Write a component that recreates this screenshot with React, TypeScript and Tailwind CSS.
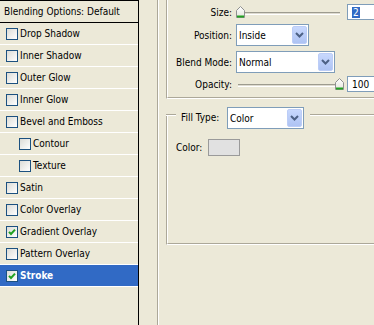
import React from 'react';

const layers = [
  { label: 'Drop Shadow' },
  { label: 'Inner Shadow' },
  { label: 'Outer Glow' },
  { label: 'Inner Glow' },
  { label: 'Bevel and Emboss' },
  { label: 'Contour', indent: true },
  { label: 'Texture', indent: true },
  { label: 'Satin' },
  { label: 'Color Overlay' },
  { label: 'Gradient Overlay', checked: true },
  { label: 'Pattern Overlay' },
  { label: 'Stroke', checked: true, selected: true },
];

const CheckBox: React.FC<{ checked?: boolean }> = ({ checked }) => (
  <span className="flex h-[12px] w-[12px] shrink-0 items-center justify-center border border-[#1c5180] bg-linear-to-br from-[#dcdcd7] to-white">
    {checked && (
      <svg width="8" height="8" viewBox="0 0 8 8">
        <path d="M1 3.8 L3 6 L7 1.6" stroke="#21a121" strokeWidth="2" fill="none" />
      </svg>
    )}
  </span>
);

const Chevron = () => (
  <svg width="9" height="6" viewBox="0 0 9 6">
    <path d="M1 1 L4.5 4.5 L8 1" stroke="#4d6185" strokeWidth="2" fill="none" />
  </svg>
);

const Dropdown: React.FC<{ value: string; width: string }> = ({ value, width }) => (
  <div className={`flex h-[22px] shrink-0 items-stretch border border-[#7f9db9] bg-white ${width}`}>
    <span className="flex flex-1 items-center pl-[2px]">{value}</span>
    <span className="m-[1px] flex w-[15px] items-center justify-center rounded-[2px] border border-[#bccdf7] bg-linear-to-b from-[#c8d8fd] to-[#aec3f3]">
      <Chevron />
    </span>
  </div>
);

const Thumb = () => (
  <svg width="9" height="12" viewBox="0 0 9 12">
    <defs>
      <linearGradient id="tg" x1="0" y1="0" x2="0" y2="1">
        <stop offset="0" stopColor="#ffffff" />
        <stop offset="1" stopColor="#e4e4dc" />
      </linearGradient>
    </defs>
    <path d="M0.5 11.5 V4.5 L4.5 0.5 L8.5 4.5 V11.5 Z" fill="url(#tg)" stroke="#8f9090" />
    <path d="M1 10.5 H8" stroke="#21a121" strokeWidth="2" />
  </svg>
);

const Slider: React.FC<{ pct: number }> = ({ pct }) => (
  <div className="relative h-[16px] w-[108px] shrink-0">
    <div className="absolute left-[2px] right-[4px] top-[8px] h-[3px] border-t border-[#9d9b8f] border-b border-b-white bg-[#dedbd0]" />
    <div className="absolute top-[2px]" style={{ left: `${pct * 99}px` }}>
      <Thumb />
    </div>
  </div>
);

const Field: React.FC<{ children: React.ReactNode }> = ({ children }) => (
  <div className="ml-[3px] flex h-[16px] w-[40px] shrink-0 items-center border border-[#7f9db9] bg-white pl-[4px]">
    {children}
  </div>
);

const Label: React.FC<{ text: string }> = ({ text }) => (
  <span className="mr-[4px] w-[64px] shrink-0 text-right">{text}</span>
);

const Etch = ({ className = '' }: { className?: string }) => (
  <div className={`h-[2px] border-t border-[#aca899] border-b border-b-white ${className}`} />
);

export default function App() {
  return (
    <div className="flex h-[325px] w-[374px] overflow-hidden bg-[#ece9d8] font-['DejaVu_Sans_Condensed','Liberation_Sans',sans-serif] text-[10px] text-black">
      {/* layer styles list */}
      <div className="h-full w-[139px] shrink-0 border-r border-black">
        <div className="flex h-[23px] items-center border-y border-black pl-[4px]">Blending Options: Default</div>
        {layers.map(l => (
          <div
            key={l.label}
            className={`flex h-[22px] items-center gap-[2px] border-b border-white ${l.indent ? 'pl-[19px]' : 'pl-[6px]'} ${l.selected ? 'bg-[#316ac5] font-bold text-white' : ''}`}
          >
            <CheckBox checked={l.checked} />
            <span>{l.label}</span>
          </div>
        ))}
      </div>

      <div className="w-[18px] shrink-0" />
      <div className="h-full w-[2px] shrink-0 border-l border-[#aca899] border-r border-r-white" />
      <div className="w-[7px] shrink-0" />

      <div className="w-[240px] shrink-0">
        {/* structure group */}
        <div className="border-l border-b border-l-[#aca899] border-b-white">
          <div className="border-l border-b border-l-white border-b-[#aca899] pt-[4px] pb-[5px]">
            <div className="flex h-[16px] items-center">
              <Label text="Size:" />
              <Slider pct={0} />
              <Field>
                <span className="bg-[#316ac5] px-[1px] leading-[11px] text-white">2</span>
              </Field>
            </div>
            <div className="mt-[4px] flex items-center">
              <Label text="Position:" />
              <Dropdown value="Inside" width="w-[73px]" />
            </div>
            <div className="mt-[5px] flex items-center">
              <Label text="Blend Mode:" />
              <Dropdown value="Normal" width="w-[99px]" />
            </div>
            <div className="mt-[3px] flex h-[16px] items-center">
              <Label text="Opacity:" />
              <Slider pct={1} />
              <Field>100</Field>
            </div>
          </div>
        </div>

        {/* fill type group */}
        <div className="mt-[8px] flex h-[22px] items-start">
          <Etch className="mt-[7px] w-[10px]" />
          <span className="ml-[5px] w-[46px] leading-[22px]">Fill Type:</span>
          <Dropdown value="Color" width="w-[77px]" />
          <Etch className="ml-[6px] mt-[7px] flex-1" />
        </div>
        <div className="-mt-[15px] border-l border-b border-l-[#aca899] border-b-white">
          <div className="h-[130px] border-l border-b border-l-white border-b-[#aca899] pl-[8px] pt-[25px]">
            <div className="flex h-[17px] items-center">
              <span className="w-[32px]">Color:</span>
              <span className="h-[17px] w-[32px] border border-[#9a9a9a] bg-[#e1e1e1]" />
            </div>
          </div>
        </div>
      </div>
    </div>
  );
}
